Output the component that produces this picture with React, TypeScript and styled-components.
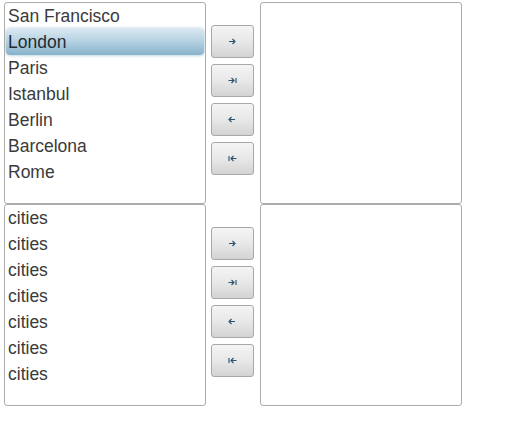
import React from "react";
import styled, { createGlobalStyle } from "styled-components";

const Global = createGlobalStyle`
  html, body { margin: 0; padding: 0; background: #ffffff; }
  body { font-family: "Liberation Sans", Arial, sans-serif; }
`;

const Page = styled.div`
  padding: 2px 0 0 4px;
  display: flex;
  flex-direction: column;
`;

const Row = styled.div`
  display: flex;
  align-items: flex-start;
`;

const ListBox = styled.ul`
  box-sizing: border-box;
  width: 202px;
  height: 202px;
  margin: 0;
  padding: 0;
  list-style: none;
  border: 1px solid #ababab;
  border-radius: 3px;
  background: #fff;
  overflow: hidden;
`;

const Item = styled.li<{ $selected?: boolean }>`
  height: 26px;
  line-height: 26px;
  margin: 0 1px;
  padding: 0 2px;
  font-size: 17.5px;
  color: ${(p) => (p.$selected ? "#1f2a33" : "#3a3a3a")};
  border-radius: 4px;
  white-space: nowrap;
  ${(p) =>
    p.$selected
      ? `background: linear-gradient(to bottom, #d9e8f1 0%, #b3d0e1 50%, #86b2cb 100%);
         box-shadow: 0 0 3px 1px rgba(120, 170, 200, 0.45);`
      : ""}
`;

const ButtonColumn = styled.div`
  display: flex;
  flex-direction: column;
  gap: 6px;
  margin: 0 6px 0 5px;
  padding-top: 23px;
`;

const MoveButton = styled.button`
  box-sizing: border-box;
  width: 43px;
  height: 33px;
  padding: 0;
  display: flex;
  align-items: center;
  justify-content: center;
  border: 1px solid #a8a8a8;
  border-radius: 3px;
  background: linear-gradient(to bottom, #f4f4f4 0%, #e8e8e8 50%, #d3d3d3 100%);
  color: #2a5470;
  cursor: pointer;
`;

type IconKind = "right" | "rightAll" | "left" | "leftAll";

const ArrowIcon: React.FC<{ kind: IconKind }> = ({ kind }) => {
  const paths: Record<IconKind, string> = {
    right: "M1 3.5H7M4.5 1L7 3.5L4.5 6",
    rightAll: "M0.5 3.5H6M3.5 1L6 3.5L3.5 6M8 1V6",
    left: "M1 3.5H7M3.5 1L1 3.5L3.5 6",
    leftAll: "M3 3.5H8.5M5.5 1L3 3.5L5.5 6M1 1V6",
  };
  return (
    <svg width="9" height="7" viewBox="0 0 9 7" fill="none">
      <path d={paths[kind]} stroke="currentColor" strokeWidth="1.15" />
    </svg>
  );
};

const Buttons: React.FC = () => (
  <ButtonColumn>
    <MoveButton aria-label="Move right">
      <ArrowIcon kind="right" />
    </MoveButton>
    <MoveButton aria-label="Move all right">
      <ArrowIcon kind="rightAll" />
    </MoveButton>
    <MoveButton aria-label="Move left">
      <ArrowIcon kind="left" />
    </MoveButton>
    <MoveButton aria-label="Move all left">
      <ArrowIcon kind="leftAll" />
    </MoveButton>
  </ButtonColumn>
);

const cities = ["San Francisco", "London", "Paris", "Istanbul", "Berlin", "Barcelona", "Rome"];
const generic = Array.from({ length: 7 }, () => "cities");

export default function App() {
  return (
    <>
      <Global />
      <Page>
        <Row>
          <ListBox>
            {cities.map((c) => (
              <Item key={c} $selected={c === "London"}>
                {c}
              </Item>
            ))}
          </ListBox>
          <Buttons />
          <ListBox />
        </Row>
        <Row>
          <ListBox>
            {generic.map((c, i) => (
              <Item key={i}>{c}</Item>
            ))}
          </ListBox>
          <Buttons />
          <ListBox />
        </Row>
      </Page>
    </>
  );
}
